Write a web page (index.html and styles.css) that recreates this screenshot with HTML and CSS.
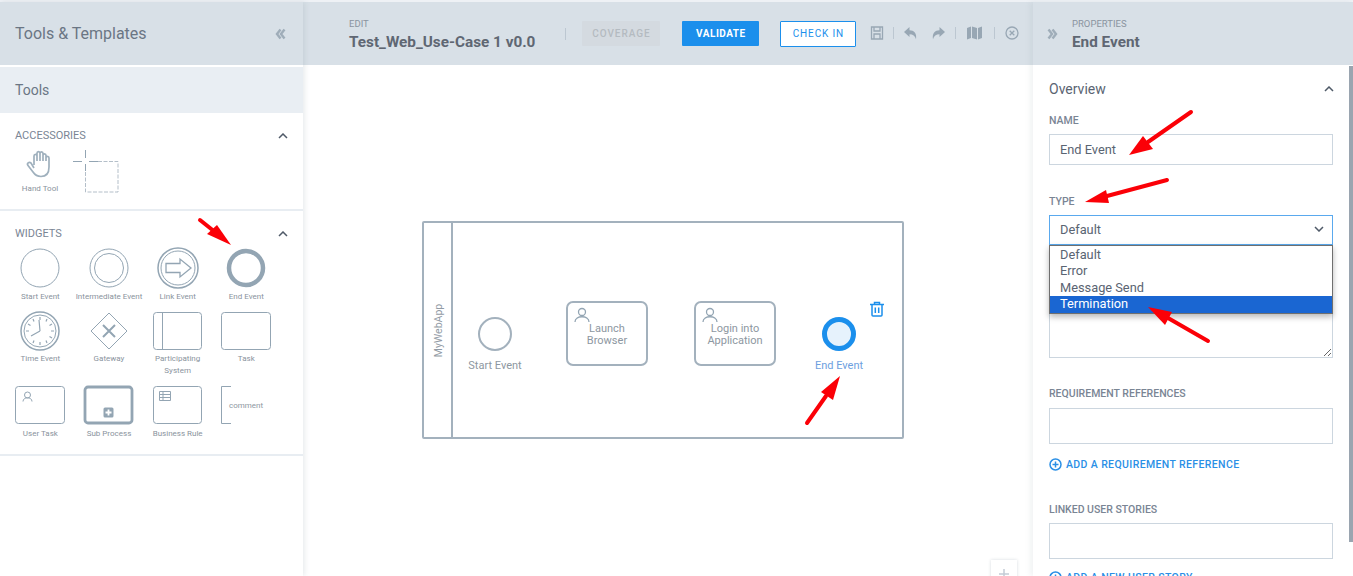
FILE: index.html
```html
<!DOCTYPE html>
<html lang="en">
<head>
  <meta charset="UTF-8" />
  <title>Test_Web_Use-Case 1 v0.0</title>
  <link rel="stylesheet" href="styles.css">
</head>
<body>

<div class="app">

  <!-- left panel -->
  <aside class="tools">
    <div class="bar tools-bar">
      <span class="tools-title">Tools &amp; Templates</span>
      <svg class="chev-double" width="12" height="12" viewBox="0 0 12 12"><path d="M5.5 1.5 2 6l3.5 4.5M9.5 1.5 6 6l3.5 4.5" /></svg>
    </div>
    <div class="tools-tab">Tools</div>

    <section class="group group-acc">
      <div class="group-head">
        <span>ACCESSORIES</span>
        <svg class="chev-up" width="10" height="6" viewBox="0 0 10 6"><path d="M1 5l4-4 4 4" /></svg>
      </div>
      <div class="acc-row">
        <div class="acc-item">
          <svg width="30" height="28" viewBox="0 0 30 28" class="ico hand"><path d="M9 15V6c0-2.2 3-2.2 3 0v5M12 11V3.200c0-2.200 3-2.200 3 0V11M15 11V3.500c0-2.200 3-2.200 3 0V11M18 11V5.500c0-2.200 3-2.200 3 0V11M21 11V8c0-2.200 3-2.200 3 0v9c0 6-3 9.500-8 9.500-4 0-6-1.500-8-4.500l-5-6.500c-1.500-2 1-4 3-2.500L9 18" /></svg>
          <span class="lbl">Hand Tool</span>
        </div>
        <svg class="marquee" width="48" height="44" viewBox="0 0 48 44">
          <path class="cross" d="M12.5 0v8M12.5 14v7M0 11.5h9M16 11.5h9" />
          <path class="dash" d="M25 11.5h20v30.500H12.500V21" />
        </svg>
      </div>
    </section>

    <section class="group group-widgets">
      <div class="group-head">
        <span>WIDGETS</span>
        <svg class="chev-up" width="10" height="6" viewBox="0 0 10 6"><path d="M1 5l4-4 4 4" /></svg>
      </div>
      <div class="widgets">
        <div class="widget">
          <svg viewBox="0 0 68 40" class="ico thin"><circle cx="34" cy="20" r="19" /></svg>
          <span class="lbl">Start Event</span>
        </div>
        <div class="widget">
          <svg viewBox="0 0 68 40" class="ico thin"><circle cx="34" cy="20" r="19" /><circle cx="34" cy="20" r="14.5" /></svg>
          <span class="lbl">Intermediate Event</span>
        </div>
        <div class="widget">
          <svg viewBox="0 0 68 40" class="ico thin"><circle cx="34" cy="20" r="20" stroke-width="1.5" /><circle cx="34" cy="20" r="17" /><path d="M22 15.5h14V11l11 9-11 9v-4.5H22z" stroke-width="1.3" /></svg>
          <span class="lbl">Link Event</span>
        </div>
        <div class="widget">
          <svg viewBox="0 0 68 40" class="ico"><circle cx="34" cy="20" r="17" stroke-width="4.5" /></svg>
          <span class="lbl">End Event</span>
        </div>

        <div class="widget widget-mid">
          <svg viewBox="0 0 68 40" class="ico thin"><circle cx="34" cy="20" r="19" stroke-width="1.5" /><circle cx="34" cy="20" r="16" /><path d="M34 20l-1-11M34 20l-9 5M34 6v3M34 31v3M20 20h3M45 20h3M41 8l-1 2.5M27 8l1 2.5M46 13l-2.5 1.5M22 13l2.5 1.5M46 27l-2.5-1.5M41 32l-1-2.5M27 32l1-2.5" stroke-width="1.2" /></svg>
          <span class="lbl">Time Event</span>
        </div>
        <div class="widget widget-mid">
          <svg viewBox="0 0 68 40" class="ico thin"><path d="M34 2l18 18-18 18-18-18z" /><path d="M28 14l12 12M40 14 28 26" stroke-width="2" /></svg>
          <span class="lbl">Gateway</span>
        </div>
        <div class="widget widget-mid">
          <svg viewBox="0 0 68 40" class="ico thin"><rect x="9.5" y="1.5" width="48" height="37" rx="3" /><path d="M18.5 1.5v37" /></svg>
          <span class="lbl">Participating<br>System</span>
        </div>
        <div class="widget widget-mid">
          <svg viewBox="0 0 68 40" class="ico thin"><rect x="9.5" y="1.5" width="49" height="37" rx="3" /></svg>
          <span class="lbl">Task</span>
        </div>

        <div class="widget">
          <svg viewBox="0 0 68 40" class="ico thin"><rect x="9.5" y="1.5" width="49" height="37" rx="3" /><circle cx="21.5" cy="10" r="3" /><path d="M17 16.5c0-5 9-5 9 0" /></svg>
          <span class="lbl">User Task</span>
        </div>
        <div class="widget">
          <svg viewBox="0 0 68 40" class="ico"><rect x="10" y="2" width="47" height="36" rx="3" stroke-width="2.8" /><rect x="28.5" y="22.5" width="10" height="10" rx="1.5" class="solid" /><path d="M33.5 24.5v6M30.5 27.5h6" class="plus" /></svg>
          <span class="lbl">Sub Process</span>
        </div>
        <div class="widget">
          <svg viewBox="0 0 68 40" class="ico thin"><rect x="9.5" y="1.5" width="48" height="37" rx="3" /><path d="M15.5 6.5h11v9h-11zM15.5 9.5h11M15.5 12.5h11M19 6.5v9" /></svg>
          <span class="lbl">Business Rule</span>
        </div>
        <div class="widget">
          <svg viewBox="0 0 68 40" class="ico thin"><path d="M19 1.5H9.5v37H19" /><text x="34" y="22.5" class="comment-text" text-anchor="middle">comment</text></svg>
        </div>
      </div>
    </section>
  </aside>

  <!-- canvas -->
  <main class="center">
    <div class="bar center-bar">
      <div class="doc">
        <span class="eyebrow">EDIT</span>
        <span class="doc-title">Test_Web_Use-Case 1 v0.0</span>
      </div>
      <span class="sep sep-doc"></span>
      <span class="btn btn-off">COVERAGE</span>
      <span class="btn btn-main">VALIDATE</span>
      <span class="btn btn-line">CHECK IN</span>
      <div class="bar-icons">
        <svg class="tb" width="14" height="14" viewBox="0 0 14 14"><path d="M1.5 1h11v12h-11zM4 1v4h6V1M4 13V8h6v5" class="tb-line" /></svg>
        <span class="sep"></span>
        <svg class="tb tb-undo" width="14" height="14" viewBox="0 0 14 14"><path d="M1 6l5.5-5v3.2c4.5 0 7.5 3 6.5 9-1-3.5-3-5-6.500-5V11z" /></svg>
        <svg class="tb tb-redo" width="14" height="14" viewBox="0 0 14 14"><path d="M13 6 7.5 1v3.2C3 4.2 0 7.200 1 13.200c1-3.500 3-5 6.500-5V11z" /></svg>
        <span class="sep"></span>
        <svg class="tb tb-map" width="15" height="14" viewBox="0 0 15 14"><path d="M0 2l4-1.5V12L0 13.5zM5 .5L10 2v11.5L5 12zM11 2l4-1.500V12l-4 1.500z" /></svg>
        <span class="sep"></span>
        <svg class="tb tb-close" width="14" height="14" viewBox="0 0 14 14"><circle cx="7" cy="7" r="6" class="tb-line" /><path d="M4.7 4.7l4.6 4.6M9.3 4.7 4.7 9.3" class="tb-line" /></svg>
      </div>
    </div>

    <div class="canvas">
      <div class="lane">
        <div class="lane-head"><span>MyWebApp</span></div>
      </div>

      <div class="node event-node start-node">
        <span class="circle"></span>
        <span class="node-lbl">Start Event</span>
      </div>
      <div class="node task task-one">
        <svg class="task-user" width="16" height="16" viewBox="0 0 16 16"><circle cx="8" cy="5" r="3.5" /><path d="M1 15c0-7 14-7 14 0" /></svg>
        <span>Launch<br>Browser</span>
      </div>
      <div class="node task task-two">
        <svg class="task-user" width="16" height="16" viewBox="0 0 16 16"><circle cx="8" cy="5" r="3.5" /><path d="M1 15c0-7 14-7 14 0" /></svg>
        <span>Login into<br>Application</span>
      </div>
      <div class="node event-node end-node">
        <span class="circle circle-end"></span>
        <span class="node-lbl">End Event</span>
      </div>
      <svg class="trash" width="16" height="16" viewBox="0 0 16 16"><path d="M1 3.5h14M5.5 3.5v-2h5v2M3 3.5V14a1 1 0 0 0 1 1h8a1 1 0 0 0 1-1V3.5M6.3 6.5V12M9.7 6.5V12" /></svg>

      <div class="zoom-btn"><svg width="12" height="12" viewBox="0 0 12 12"><path d="M6 1v10M1 6h10" /></svg></div>
    </div>
  </main>

  <!-- properties -->
  <aside class="props">
    <div class="bar props-bar">
      <svg class="chev-double" width="12" height="12" viewBox="0 0 12 12"><path d="M1.5 1.5 5 6l-3.5 4.5M5.500 1.500 9 6l-3.500 4.500" /></svg>
      <div class="doc">
        <span class="eyebrow">PROPERTIES</span>
        <span class="doc-title">End Event</span>
      </div>
    </div>
    <div class="props-body">
      <div class="overview-head">
        <span>Overview</span>
        <svg class="chev-up" width="10" height="6" viewBox="0 0 10 6"><path d="M1 5l4-4 4 4" /></svg>
      </div>

      <div class="field-lbl lbl-name">NAME</div>
      <div class="input input-name">End Event</div>

      <div class="field-lbl lbl-type">TYPE</div>
      <div class="select-wrap">
        <div class="input select-box">
          <span>Default</span>
          <svg width="10" height="6" viewBox="0 0 10 6"><path d="M1 1l4 4 4-4" /></svg>
        </div>
        <ul class="options">
          <li>Default</li>
          <li>Error</li>
          <li>Message Send</li>
          <li class="picked">Termination</li>
        </ul>
      </div>

      <textarea class="notes" aria-label="Description"></textarea>

      <div class="field-lbl lbl-req">REQUIREMENT REFERENCES</div>
      <div class="input input-tall"></div>
      <div class="add-link">
        <svg width="13" height="13" viewBox="0 0 13 13"><circle cx="6.5" cy="6.5" r="5.5" /><path d="M6.5 3.5v6M3.5 6.5h6" /></svg>
        <span>ADD A REQUIREMENT REFERENCE</span>
      </div>

      <div class="field-lbl lbl-stories">LINKED USER STORIES</div>
      <div class="input input-tall input-stories"></div>
      <div class="add-link add-story">
        <svg width="13" height="13" viewBox="0 0 13 13"><circle cx="6.5" cy="6.5" r="5.5" /><path d="M6.5 3.5v6M3.5 6.5h6" /></svg>
        <span>ADD A NEW USER STORY</span>
      </div>
    </div>
    <div class="scroll-thumb"></div>
  </aside>
</div>

<!-- red annotation arrows on top of the screenshot -->
<svg class="arrows" width="1353" height="576" viewBox="0 0 1353 576">
  <path d="M200 220 215 232" /><polygon points="231,245 217,225 207,234" />
  <path d="M807 423 826 396" /><polygon points="840,376 821,392 833,400" />
  <path d="M1191 112 1148 142" /><polygon points="1129,155 1143,136 1153,149" />
  <path d="M1167 180 1107 196" /><polygon points="1085,202 1106,190 1109,203" />
  <path d="M1208 341 1168 318" /><polygon points="1148,307 1172,312 1165,325" />
</svg>

</body>
</html>
```

FILE: styles.css
```css
* {
  box-sizing: border-box;
}
html, body {
  margin: 0;
  height: 576px;
  overflow: hidden;
}
body {
  position: relative;
  font-family: Roboto, "Liberation Sans", sans-serif;
  color: #6b7684;
  background: #fff;
  padding-top: 2px;
}
body::before {
  content: "";
  position: absolute;
  top: 0;
  left: 0;
  right: 0;
  height: 2px;
  background: #eef1f5;
}
.app {
  display: grid;
  grid-template-columns: 303px 730px 320px;
  height: 574px;
}
.bar {
  height: 63px;
  background: #d8e0e7;
  display: flex;
  align-items: center;
}
.chev-double path {
  fill: none;
  stroke: #9fadb9;
  stroke-width: 2.4;
}
.chev-up path {
  fill: none;
  stroke: #4f5a68;
  stroke-width: 1.5;
}
.ico {
  fill: none;
  stroke: #93a5b3;
  stroke-width: 1.5;
}
.ico.thin {
  stroke-width: 1;
}
.ico .solid {
  fill: #93a5b3;
  stroke: none;
}
.ico .plus {
  stroke: #fff;
  stroke-width: 1.8;
}
.lbl {
  font-size: 8px;
  line-height: 12px;
  color: #8a939d;
  text-align: center;
  white-space: nowrap;
}

/* left panel */
.tools {
  position: relative;
  z-index: 2;
  box-shadow: 2px 0 5px rgba(120, 135, 150, .16);
  background: #fff;
}
.tools-bar {
  justify-content: space-between;
  padding: 0 16px 0 15px;
}
.tools-title {
  font-size: 16px;
}
.tools-tab {
  margin-top: 2px;
  height: 46px;
  padding-left: 15px;
  line-height: 46px;
  font-size: 14px;
  background: #e9eef3;
}
.group {
  border-bottom: 2px solid #e8edf2;
}
.group-acc {
  height: 98px;
  padding: 17px 15px 0;
}
.group-widgets {
  height: 245px;
  padding: 17px 15px 0;
}
.group-head {
  display: flex;
  justify-content: space-between;
  align-items: center;
  font-size: 11px;
  line-height: 12px;
  color: #7a8594;
}
.acc-row {
  display: flex;
  margin-top: 8px;
}
.acc-item {
  width: 48px;
  display: flex;
  flex-direction: column;
  align-items: center;
  margin-left: 1px;
}
.hand {
  stroke-width: 1.7;
  stroke: #9fb0bd;
}
.acc-item .lbl {
  margin-top: 5px;
}
.marquee {
  margin-left: 9px;
}
.marquee path {
  fill: none;
  stroke: #b4bfc9;
  stroke-width: 1;
}
.marquee .cross {
  stroke: #93a5b3;
}
.marquee .dash {
  stroke-dasharray: 4 1.5;
}
.widgets {
  display: grid;
  grid-template-columns: repeat(4, 68.67px);
  grid-template-rows: 63px 74px 60px;
  margin: 8px 0 0 -9px;
}
.widget {
  display: flex;
  flex-direction: column;
  align-items: center;
}
.widget svg {
  width: 68px;
  height: 40px;
  overflow: visible;
}
.widget .lbl {
  margin-top: 3px;
}
.widget-mid .lbl {
  margin-top: 2px;
}
.comment-text {
  font-family: Roboto, sans-serif;
  font-size: 8px;
  fill: #8d97a1;
  stroke: none;
}

/* center */
.center {
  position: relative;
  min-width: 0;
}
.center-bar {
  padding-left: 46px;
}
.doc {
  display: flex;
  flex-direction: column;
  padding-top: 2px;
}
.eyebrow {
  font-size: 9.5px;
  line-height: 12px;
  color: #8a949f;
}
.doc-title {
  margin-top: 2px;
  font-size: 15.3px;
  line-height: 20px;
  font-weight: 700;
  color: #5f6773;
  white-space: nowrap;
}
.sep {
  display: block;
  width: 1px;
  height: 12px;
  background: #bcc7d1;
}
.sep-doc {
  margin-left: 30px;
}
.btn {
  display: flex;
  align-items: center;
  justify-content: center;
  height: 25px;
  font-size: 10px;
  letter-spacing: .5px;
  border-radius: 1px;
}
.btn-off {
  width: 78px;
  margin-left: 16px;
  color: #b4bbc1;
  background: #d4dae0;
  font-weight: 500;
  letter-spacing: .95px;
}
.btn-main {
  width: 77px;
  margin-left: 22px;
  color: #fff;
  background: #1b8fec;
  font-weight: 700;
}
.btn-line {
  width: 76px;
  height: 26px;
  margin-left: 21px;
  color: #1b8fec;
  background: #fff;
  border: 1px solid #1b8fec;
  letter-spacing: .85px;
}
.bar-icons {
  display: flex;
  align-items: center;
  margin: 0 0 2px 14px;
  gap: 9px;
}
.tb {
  fill: #98a7b4;
  flex: none;
}
.tb .tb-line {
  fill: none;
  stroke: #98a7b4;
  stroke-width: 1.3;
}
.tb-redo {
  margin-left: 6px;
}
.tb-map {
  margin: 0 3px 0 2px;
}
.tb-close {
  margin-left: 1px;
}
.canvas {
  position: relative;
  height: 511px;
  overflow: hidden;
}
.lane {
  position: absolute;
  left: 119px;
  top: 156px;
  width: 482px;
  height: 218px;
  border: 2px solid #a3b1bd;
  border-radius: 2px;
}
.lane-head {
  width: 29px;
  height: 100%;
  border-right: 2px solid #a3b1bd;
  display: flex;
  align-items: center;
  justify-content: center;
  padding-left: 2px;
}
.lane-head span {
  font-size: 10.5px;
  color: #929ba5;
  transform: rotate(-90deg);
  white-space: nowrap;
}
.node {
  position: absolute;
  font-size: 11px;
  line-height: 12px;
  color: #8d97a1;
  text-align: center;
}
.event-node {
  width: 80px;
  top: 252px;
  display: flex;
  flex-direction: column;
  align-items: center;
  gap: 9px;
}
.start-node {
  left: 152px;
}
.end-node {
  left: 496px;
  color: #6d9fe0;
}
.circle {
  display: block;
  width: 34px;
  height: 34px;
  border: 2px solid #a3b1bd;
  border-radius: 50%;
}
.circle-end {
  border: 5px solid #1b8fec;
  background: #e6f2fc;
}
.task {
  top: 236px;
  width: 82px;
  height: 65px;
  padding-top: 20px;
  border: 2px solid #a3b1bd;
  border-radius: 7px;
}
.task-one {
  left: 263px;
}
.task-two {
  left: 391px;
}
.task-user {
  position: absolute;
  left: 6px;
  top: 4px;
  fill: none;
  stroke: #93a5b3;
  stroke-width: 1.3;
}
.trash {
  position: absolute;
  left: 566px;
  top: 236px;
  fill: none;
  stroke: #1b8fec;
  stroke-width: 1.5;
}
.zoom-btn {
  position: absolute;
  left: 688px;
  top: 495px;
  width: 26px;
  height: 30px;
  background: #fff;
  box-shadow: 0 0 3px rgba(120, 135, 150, .3);
  display: flex;
  justify-content: center;
  padding-top: 8px;
}
.zoom-btn path {
  stroke: #c3ccd6;
  stroke-width: 1.5;
}

/* properties */
.props {
  position: relative;
  z-index: 2;
  background: #fff;
  box-shadow: -3px 0 5px rgba(120, 135, 150, .1);
  overflow: hidden;
}
.props-bar {
  padding-left: 14px;
  gap: 13px;
}
.props-body {
  padding: 15px 20px 0 16px;
}
.overview-head {
  display: flex;
  justify-content: space-between;
  align-items: center;
  font-size: 14px;
  line-height: 18px;
  color: #5a6472;
}
.overview-head svg {
  margin-right: -1px;
}
.field-lbl {
  font-size: 10.5px;
  line-height: 12px;
  font-weight: 500;
  color: #7a8594;
}
.lbl-name {
  margin-top: 17px;
}
.lbl-type {
  margin-top: 31px;
}
.lbl-req {
  margin-top: 30px;
}
.lbl-stories {
  margin-top: 33px;
}
.input {
  margin-top: 8px;
  height: 31px;
  border: 1px solid #ccd6df;
  padding: 0 10px;
  font-size: 12.8px;
  line-height: 29px;
  color: #5a6472;
}
.input-name {
  margin-top: 7px;
}
.input-tall {
  height: 36px;
}
.input-stories {
  margin-top: 7px;
}
.select-wrap {
  position: relative;
}
.select-box {
  display: flex;
  justify-content: space-between;
  align-items: center;
  height: 30px;
  margin-top: 7px;
  border-color: #5aa9ee;
  padding: 0 8px 2px 10px;
}
.select-box svg path {
  fill: none;
  stroke: #4f5a68;
  stroke-width: 1.5;
}
.options {
  position: absolute;
  left: 0;
  right: 0;
  top: 30px;
  margin: 0;
  padding: 1px 0 0;
  list-style: none;
  background: #fff;
  border: 1px solid #6f6f6f;
  box-shadow: 0 3px 6px rgba(0, 0, 0, .28);
  font-size: 12.8px;
  line-height: 16.4px;
  color: #5a6472;
}
.options li {
  padding-left: 10px;
}
.options .picked {
  background: #1a66d2;
  color: #fff;
}
.notes {
  display: block;
  width: 100%;
  height: 113px;
  margin: 0;
  border: 1px solid #ccd6df;
  border-top: 0;
  background: #fff;
  resize: vertical;
  outline: 0;
}
.add-link {
  display: flex;
  align-items: center;
  gap: 4px;
  margin-top: 14px;
  font-size: 10.5px;
  line-height: 13px;
  font-weight: 500;
  letter-spacing: .38px;
  color: #2a8fe6;
}
.add-link svg {
  fill: none;
  stroke: #2a8fe6;
  stroke-width: 1.5;
}
.add-story {
  margin-top: 12px;
}
.scroll-thumb {
  position: absolute;
  right: 0;
  top: 64px;
  width: 4px;
  height: 476px;
  background: #9aa5b0;
}

/* annotation arrows */
.arrows {
  position: absolute;
  left: 0;
  top: 0;
  z-index: 5;
  pointer-events: none;
}
.arrows path {
  fill: none;
  stroke: #fb0007;
  stroke-width: 4;
  stroke-linecap: round;
}
.arrows polygon {
  fill: #fb0007;
}
```
